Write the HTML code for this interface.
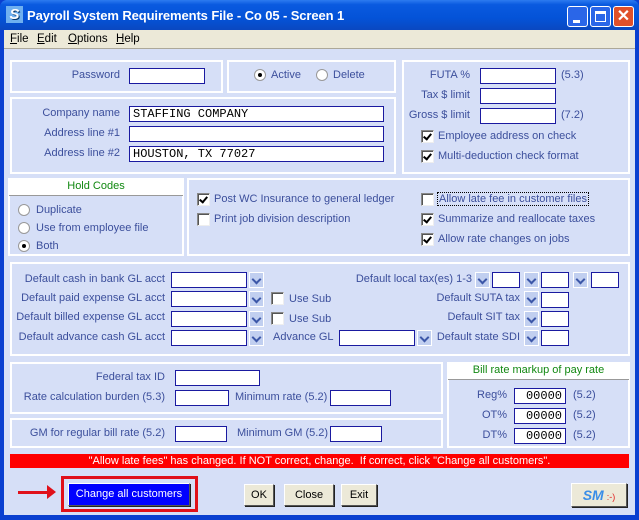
<!DOCTYPE html>
<html><head><meta charset="utf-8"><style>
*{box-sizing:border-box;margin:0;padding:0}
body{width:639px;height:520px;overflow:hidden;background:#0a3fd0;font-family:"Liberation Sans",sans-serif;font-size:11px;position:relative}
.a{position:absolute}
#title{left:0;top:0;width:639px;height:30px;background:linear-gradient(#2d7bf0 0%,#0a5ae0 15%,#0453d8 60%,#0a48c0 100%);border-radius:7px 7px 0 0}
#title .t{left:27px;top:8px;color:#fff;font-weight:bold;font-size:13px;letter-spacing:-0.1px}
#menu{left:4px;top:30px;width:631px;height:19px;background:#ece9d8;border-bottom:1px solid #aca899}
#menu span{position:absolute;top:3px;font-size:11.5px;color:#000}
#body{left:4px;top:49px;width:631px;height:466px;background:#d6dff7}
.p{position:absolute;border:2px solid #fff;background:#d6dff7}
.l{position:absolute;color:#3c4f9c;white-space:nowrap;font-size:11px;margin-top:1px}
.r{text-align:right}
.i{position:absolute;background:#fff;border:1px solid #1a1aa0;height:16px;font-family:"Liberation Mono",monospace;font-size:12px;padding-left:3px;line-height:14px;color:#000}
.dd{position:absolute;width:15px;height:16px;background:#c1cff0;border:1px solid #fff}
.dd:after{content:"";position:absolute;left:3px;top:3px;width:5px;height:5px;border-right:2px solid #3c57a8;border-bottom:2px solid #3c57a8;transform:rotate(45deg)}
.cb{position:absolute;width:13px;height:13px;background:#fff;border:1px solid;border-color:#888 #eee #eee #888;box-shadow:inset 1px 1px #555}
.cb.k:after{content:"";position:absolute;left:3px;top:1px;width:3px;height:6px;border-right:2px solid #000;border-bottom:2px solid #000;transform:rotate(40deg)}
.rd{position:absolute;width:12px;height:12px;border-radius:50%;background:#fff;border:1px solid #999}
.rd.k:after{content:"";position:absolute;left:3px;top:3px;width:4px;height:4px;border-radius:50%;background:#000}
.hd{position:absolute;background:#fff;color:#118811;text-align:center;font-size:11px;border-bottom:1px solid #999}
.btn{position:absolute;background:#ece9d8;border:1px solid;border-color:#fff #555 #555 #fff;box-shadow:1px 1px #222;text-align:center;font-size:11px;color:#000;line-height:20px}
</style></head><body>
<div id="title" class="a">
 <div class="a" style="left:6px;top:6px;width:17px;height:17px;background:#6fb0f0;color:#fff;font-weight:bold;font-style:italic;font-size:15px;line-height:17px;text-align:center;text-shadow:1px 1px #036">S</div>
 <div class="a t">Payroll System Requirements File - Co 05 - Screen 1</div>
 <div class="a" style="left:567px;top:6px;width:21px;height:21px;border:1px solid #fff;border-radius:3px;background:#2a66e8"><div class="a" style="left:5px;top:13px;width:7px;height:3px;background:#fff"></div></div>
 <div class="a" style="left:590px;top:6px;width:21px;height:21px;border:1px solid #fff;border-radius:3px;background:#2a66e8"><div class="a" style="left:4px;top:4px;width:11px;height:11px;border:1px solid #fff;border-top-width:3px"></div></div>
 <div class="a" style="left:613px;top:6px;width:21px;height:21px;border:1px solid #fff;border-radius:3px;background:#e0502a;color:#fff;font-weight:bold;font-size:16px;line-height:19px;text-align:center">✕</div>
</div>
<div id="menu" class="a"><span style="left:6px"><u>F</u>ile</span><span style="left:33px"><u>E</u>dit</span><span style="left:64px"><u>O</u>ptions</span><span style="left:112px"><u>H</u>elp</span></div>
<div class="a" style="left:4px;top:49px;width:631px;height:1px;background:#fff"></div>
<div id="body" class="a"></div>

<div class="p" style="left:10px;top:60px;width:213px;height:33px"></div>
<div class="l r" style="left:20px;top:68px;width:100px">Password</div>
<div class="i" style="left:129px;top:68px;width:76px"></div>

<div class="p" style="left:227px;top:60px;width:169px;height:33px"></div>
<div class="rd k" style="left:254px;top:69px"></div><div class="l" style="left:271px;top:68px">Active</div>
<div class="rd" style="left:316px;top:69px"></div><div class="l" style="left:333px;top:68px">Delete</div>

<div class="p" style="left:402px;top:60px;width:228px;height:114px"></div>
<div class="l r" style="left:400px;top:68px;width:70px">FUTA %</div>
<div class="i" style="left:480px;top:68px;width:76px"></div><div class="l" style="left:561px;top:68px">(5.3)</div>
<div class="l r" style="left:400px;top:88px;width:70px">Tax $ limit</div>
<div class="i" style="left:480px;top:88px;width:76px"></div>
<div class="l r" style="left:400px;top:108px;width:70px">Gross $ limit</div>
<div class="i" style="left:480px;top:108px;width:76px"></div><div class="l" style="left:561px;top:108px">(7.2)</div>
<div class="cb k" style="left:421px;top:130px"></div><div class="l" style="left:438px;top:129px">Employee address on check</div>
<div class="cb k" style="left:421px;top:150px"></div><div class="l" style="left:438px;top:149px">Multi-deduction check format</div>

<div class="p" style="left:10px;top:97px;width:386px;height:77px"></div>
<div class="l r" style="left:20px;top:106px;width:100px">Company name</div>
<div class="i" style="left:129px;top:106px;width:255px">STAFFING COMPANY</div>
<div class="l r" style="left:20px;top:126px;width:100px">Address line #1</div>
<div class="i" style="left:129px;top:126px;width:255px"></div>
<div class="l r" style="left:20px;top:146px;width:100px">Address line #2</div>
<div class="i" style="left:129px;top:146px;width:255px">HOUSTON, TX 77027</div>

<div class="p" style="left:8px;top:178px;width:176px;height:78px"></div>
<div class="hd" style="left:9px;top:179px;width:174px;height:17px;line-height:15px">Hold Codes</div>
<div class="rd" style="left:18px;top:204px"></div><div class="l" style="left:36px;top:203px">Duplicate</div>
<div class="rd" style="left:18px;top:222px"></div><div class="l" style="left:36px;top:221px">Use from employee file</div>
<div class="rd k" style="left:18px;top:240px"></div><div class="l" style="left:36px;top:239px">Both</div>

<div class="p" style="left:187px;top:178px;width:443px;height:78px"></div>
<div class="cb k" style="left:197px;top:193px"></div><div class="l" style="left:214px;top:192px">Post WC Insurance to general ledger</div>
<div class="cb" style="left:197px;top:213px"></div><div class="l" style="left:214px;top:212px">Print job division description</div>
<div class="cb" style="left:421px;top:193px"></div><div class="l" style="left:437px;top:191px;border:1px dotted #000;padding:0 1px">Allow late fee in customer files</div>
<div class="cb k" style="left:421px;top:213px"></div><div class="l" style="left:438px;top:212px">Summarize and reallocate taxes</div>
<div class="cb k" style="left:421px;top:233px"></div><div class="l" style="left:438px;top:232px">Allow rate changes on jobs</div>

<div class="p" style="left:10px;top:262px;width:620px;height:94px"></div>
<div class="l r" style="left:10px;top:272px;width:155px">Default cash in bank GL acct</div>
<div class="i" style="left:171px;top:272px;width:76px"></div><div class="dd" style="left:249px;top:272px"></div>
<div class="l r" style="left:10px;top:291px;width:155px">Default paid expense GL acct</div>
<div class="i" style="left:171px;top:291px;width:76px"></div><div class="dd" style="left:249px;top:291px"></div>
<div class="cb" style="left:271px;top:292px"></div><div class="l" style="left:289px;top:292px">Use Sub</div>
<div class="l r" style="left:10px;top:310px;width:155px">Default billed expense GL acct</div>
<div class="i" style="left:171px;top:311px;width:76px"></div><div class="dd" style="left:249px;top:311px"></div>
<div class="cb" style="left:271px;top:312px"></div><div class="l" style="left:289px;top:312px">Use Sub</div>
<div class="l r" style="left:10px;top:330px;width:155px">Default advance cash GL acct</div>
<div class="i" style="left:171px;top:330px;width:76px"></div><div class="dd" style="left:249px;top:330px"></div>
<div class="l" style="left:273px;top:330px">Advance GL</div>
<div class="i" style="left:339px;top:330px;width:76px"></div><div class="dd" style="left:417px;top:330px"></div>
<div class="l r" style="left:330px;top:272px;width:142px">Default local tax(es) 1-3</div>
<div class="dd" style="left:475px;top:272px"></div><div class="i" style="left:492px;top:272px;width:28px"></div>
<div class="dd" style="left:524px;top:272px"></div><div class="i" style="left:541px;top:272px;width:28px"></div>
<div class="dd" style="left:573px;top:272px"></div><div class="i" style="left:591px;top:272px;width:28px"></div>
<div class="l r" style="left:400px;top:291px;width:120px">Default SUTA tax</div>
<div class="dd" style="left:524px;top:291px"></div><div class="i" style="left:541px;top:292px;width:28px"></div>
<div class="l r" style="left:400px;top:310px;width:120px">Default SIT tax</div>
<div class="dd" style="left:524px;top:311px"></div><div class="i" style="left:541px;top:311px;width:28px"></div>
<div class="l r" style="left:400px;top:330px;width:120px">Default state SDI</div>
<div class="dd" style="left:524px;top:330px"></div><div class="i" style="left:541px;top:330px;width:28px"></div>

<div class="p" style="left:10px;top:362px;width:433px;height:52px"></div>
<div class="l r" style="left:10px;top:370px;width:155px">Federal tax ID</div>
<div class="i" style="left:175px;top:370px;width:85px"></div>
<div class="l r" style="left:10px;top:390px;width:155px">Rate calculation burden (5.3)</div>
<div class="i" style="left:175px;top:390px;width:54px"></div>
<div class="l" style="left:235px;top:390px">Minimum rate (5.2)</div>
<div class="i" style="left:330px;top:390px;width:61px"></div>

<div class="p" style="left:10px;top:418px;width:433px;height:30px"></div>
<div class="l r" style="left:10px;top:426px;width:155px">GM for regular bill rate (5.2)</div>
<div class="i" style="left:175px;top:426px;width:52px"></div>
<div class="l" style="left:237px;top:426px">Minimum GM (5.2)</div>
<div class="i" style="left:330px;top:426px;width:52px"></div>

<div class="p" style="left:447px;top:362px;width:183px;height:86px"></div>
<div class="hd" style="left:448px;top:363px;width:181px;height:17px;line-height:15px">Bill rate markup of pay rate</div>
<div class="l r" style="left:460px;top:388px;width:47px">Reg%</div>
<div class="i" style="left:514px;top:388px;width:52px;text-align:right;padding-right:3px">00000</div><div class="l" style="left:573px;top:388px">(5.2)</div>
<div class="l r" style="left:460px;top:408px;width:47px">OT%</div>
<div class="i" style="left:514px;top:408px;width:52px;text-align:right;padding-right:3px">00000</div><div class="l" style="left:573px;top:408px">(5.2)</div>
<div class="l r" style="left:460px;top:428px;width:47px">DT%</div>
<div class="i" style="left:514px;top:428px;width:52px;text-align:right;padding-right:3px">00000</div><div class="l" style="left:573px;top:428px">(5.2)</div>

<div class="a" style="left:10px;top:454px;width:619px;height:14px;background:#ff0000;color:#fff;text-align:center;font-size:11px;line-height:14px">"Allow late fees" has changed. If NOT correct, change.&nbsp; If correct, click "Change all customers".</div>

<div class="a" style="left:18px;top:491px;width:32px;height:3px;background:#e0101a"></div>
<div class="a" style="left:47px;top:485px;width:0;height:0;border-left:9px solid #e0101a;border-top:7px solid transparent;border-bottom:7px solid transparent"></div>
<div class="a" style="left:61px;top:476px;width:137px;height:36px;border:3px solid #e0101a"></div>
<div class="btn" style="left:68px;top:483px;width:122px;height:23px;background:#0000ff;color:#fff">Change all customers</div>
<div class="btn" style="left:244px;top:484px;width:30px;height:22px">OK</div>
<div class="btn" style="left:284px;top:484px;width:50px;height:22px">Close</div>
<div class="btn" style="left:341px;top:484px;width:36px;height:22px">Exit</div>
<div class="btn" style="left:571px;top:483px;width:56px;height:24px;line-height:22px"><b style="color:#3a8ee8;font-style:italic;font-size:14px">SM</b> <span style="color:#e02020;font-size:9px">:-)</span></div>
</body></html>
